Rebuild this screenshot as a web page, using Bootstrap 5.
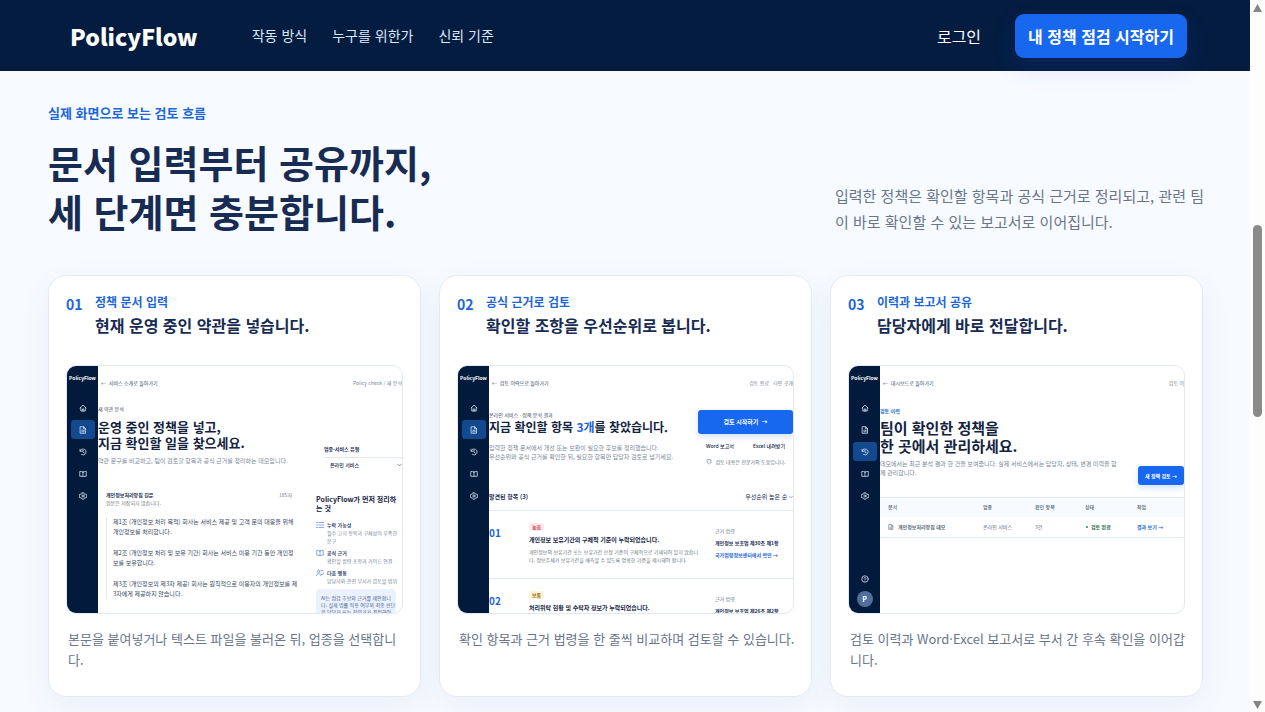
<!DOCTYPE html>
<html lang="ko">
<head>
<meta charset="utf-8">
<meta name="viewport" content="width=device-width, initial-scale=1">
<title>PolicyFlow</title>
<link href="https://cdn.jsdelivr.net/npm/bootstrap@5.3.0/dist/css/bootstrap.min.css" rel="stylesheet">
<style>
:root{--navy:#041c40;--ink:#172b53;--blue:#1868ef;--link:#1c66d8;--mute:#697589;--line:#e3e9f1}
body{font-family:"Noto Sans CJK KR","Noto Sans",sans-serif;background:#f7fbff;color:var(--ink);padding-right:15px;min-height:100vh}
a{text-decoration:none}
/* header */
.site-head{background:var(--navy);height:71px;padding:0 63px 0 70px;position:relative}
.brand-name{font-size:23px;line-height:40px;font-weight:900;color:#fff}
.site-nav{gap:25px;margin-left:54px}
.site-nav a{font-size:14px;color:#dbe6f7}
.login{font-size:16px;color:#fff;margin-right:34px}
.btn-start{background:var(--blue);color:#fff;font-weight:700;font-size:16px;line-height:24px;padding:10px 13px;border:0;border-radius:9px;box-shadow:0 10px 24px rgba(37,84,235,.15)}
.btn-start:hover{background:#0f58d6;color:#fff}
/* section */
.flow{padding:32px 47px 14px 48px}
.eyebrow{font-size:13px;line-height:20px;font-weight:700;color:var(--link);margin-bottom:14px}
.flow h2{font-size:38px;line-height:49px;font-weight:700;margin:0}
.lead-in{width:368px;font-size:15px;line-height:26px;color:var(--mute);margin:0;white-space:nowrap}
.steps{display:grid;grid-template-columns:repeat(3,minmax(0,1fr));gap:18px;margin-top:40px}
.step{background:#fff;border:1px solid #e3ebf5;border-radius:18px;padding:17px 17px 26px;box-shadow:0 10px 30px rgba(40,90,190,.07)}
.step-head{display:grid;grid-template-columns:29px 1fr;margin-bottom:26px}
.step-no{font-size:14px;line-height:22px;font-weight:700;color:var(--link)}
.step-label{font-size:12px;line-height:18px;font-weight:700;color:var(--link);margin:0}
.step h3{font-size:16px;line-height:28px;font-weight:700;margin:0}
.step-text{font-size:13px;line-height:21px;color:var(--mute);margin:14px 0 0 2px;white-space:nowrap}
/* product previews */
.shot{aspect-ratio:336/248;margin:0;border:1px solid var(--line);border-radius:10px;overflow:hidden;display:flex;white-space:nowrap;font-size:5px;line-height:8px;background:#fff}
.shot-side{flex:0 0 31px;background:#021a3b;color:#d5e2f5;display:flex;flex-direction:column;align-items:center;padding:8px 0 6px}
.shot-side b{color:#fff;margin-bottom:16px}
.shot-side i{display:flex;width:24px;height:19px;margin-bottom:3px;border-radius:3px;align-items:center;justify-content:center}
.shot-side i.on{background:#12498f}
.shot-side svg{width:8px;height:8px}
.ico{fill:none;stroke:currentColor;stroke-width:1.6;stroke-linecap:round;stroke-linejoin:round;flex:none}
.avatar{width:16px;height:16px;border-radius:50%;background:#506f9d;color:#fff;font-size:7px;line-height:16px;font-weight:700;text-align:center}
.shot-main{flex:1;min-width:0;overflow:hidden}
.shot-top{display:flex;justify-content:space-between;height:34px;align-items:center;padding-left:3px;color:#7a8596}
.shot-top a{color:#35486a}
.shot-title{font-weight:700;font-size:13px;line-height:16px;color:#14233f}
.title-sm{font-size:12px}
.title-lg{font-size:15px;line-height:18px}
.hero-input{padding:5px 0 7px}
.hero-input .shot-title{margin:6px 0 5px}
.hero-result{padding-top:11px}
.hero-log{padding:7px 0 8px}
.side-actions{padding-top:10px;width:95px}
.shot-kick{color:#34435d}
.shot-par{font-size:6px;line-height:9px;color:#7a8596}
.shot select{appearance:none;border:0;border-top:1px solid var(--line);background:transparent;font-size:5px;line-height:8px;font-weight:500;color:#14233f;width:78px;padding:3px 6px;display:block}
.shot button{border:0;background:none;padding:0;font-weight:500;color:#14233f;font-size:5px;line-height:8px}
.shot button.go{background:var(--blue);color:#fff;font-weight:700;border-radius:3px;box-shadow:0 3px 6px rgba(24,104,239,.2)}
.shot button.go-lg{width:100%;height:24px;font-size:6px}
.shot button.go-sm{width:46px;height:19px;margin:0 0 8px -30px;flex:none}
.editor{margin-top:19px}
.doc{padding:0 0 0 6px;border-left:1px solid var(--line);margin-top:10px;font-size:6px;line-height:10px;color:#34435d}
.doc p{margin:0 0 11px}
.tips{flex:0 0 86px}
.tips strong{font-size:7px;line-height:9px;display:block;color:#14233f}
.tip{display:grid;grid-template-columns:11px 1fr;color:#7a8596}
.tip svg{width:8px;height:8px;color:#6a95df}
.tip b{color:#35486a;display:block}
.note{background:#eaf1ff;color:#50658c;border-radius:4px;padding:5px;width:80px;line-height:7px;margin-top:4px}
.found{margin:27px 0 9px;font-size:6px}
.find{display:grid;grid-template-columns:40px 186px 1fr;border-top:1px solid var(--line);height:68px;padding-top:12px}
.find-no{font-size:10px;line-height:20px;font-weight:700;color:var(--link)}
.find-tag{display:inline-block;padding:0 3px;border-radius:2px;background:#ffe9ec;color:#d04458;font-weight:700}
.find-tag.mid{background:#fff3d6;color:#a07418}
.find h4{font-size:6px;line-height:10px;font-weight:700;margin:4px 0 3px;color:#14233f}
.blue-text{color:var(--link)}
.log{width:304px;border-collapse:collapse;margin:12px 0 0;color:#5b687d}
.log th{background:#f7fbff;border-top:1px solid var(--line);height:19px;font-weight:500;padding:0}
.log td{height:21px;padding:0;border-bottom:1px solid var(--line)}
.log .first{padding-left:8px}
.log .done{color:#2c6b50}
.dot{display:inline-block;width:2px;height:2px;border-radius:50%;background:#2c8b60;vertical-align:middle;margin:0 3px 0 1px}
/* scroll rail */
.rail{position:fixed;inset:0 0 0 auto;width:15px;background:#fdfdfd;display:flex;flex-direction:column;align-items:center;justify-content:space-between;padding:4px 0 3px}
.rail svg{width:9px;height:8px;fill:#858585}
.rail-thumb{position:absolute;top:31.6%;height:27%;width:9px;border-radius:5px;background:#8a8a8a}
</style>
</head>
<body>
<svg class="d-none" xmlns="http://www.w3.org/2000/svg">
<symbol id="home" viewBox="0 0 16 16"><path d="M2 8 8 2l6 6M3.500 7v7h9V7M6.500 14v-4h3v4"/></symbol>
<symbol id="file" viewBox="0 0 16 16"><path d="M3 1.500h6.500L13 5v9.500H3zM9 1.500V5.500h4M5.500 8.500h5M5.500 11.500h5"/></symbol>
<symbol id="hist" viewBox="0 0 16 16"><path d="M2 2.500v4h4M2.500 6A6 6 0 1 1 5 13M8 5v3.500l2.500 1.500"/></symbol>
<symbol id="book" viewBox="0 0 16 16"><path d="M8 4v9M8 4C6 3 4 3 1.500 3v9.500H6.500L8 13.500l1.500-1H14.500V3C12 3 10 3 8 4z"/></symbol>
<symbol id="gear" viewBox="0 0 16 16"><circle cx="8" cy="8" r="2.200"/><path d="m6.500 1.500h3l.6 2 2 1.100 2-.5 1.400 2.500L14 8l1.500 1.500-1.400 2.500-2-.5-2 1.100-.6 2h-3l-.6-2-2-1.100-2 .5L.5 9.500 2 8 .5 6.500 1.900 4l2 .5 2-1.100z"/></symbol>
<symbol id="help" viewBox="0 0 16 16"><circle cx="8" cy="8" r="6.500"/><path d="M6 6.500C6 4 10 4 10 6.500 10 8 8 8 8 9.500M8 11.800v.1"/></symbol>
<symbol id="list" viewBox="0 0 16 16"><path d="M1 3h2M6 3h9M1 8h2M6 8h9M1 13h2M6 13h9"/></symbol>
<symbol id="team" viewBox="0 0 16 16"><circle cx="5" cy="5" r="2.500"/><path d="M1 13c0-5 8-5 8 0M10 10l2 2 3.500-5M10 3h4"/></symbol>
<symbol id="shield" viewBox="0 0 16 16"><path d="M13 9V3H3v5c0 4 3 5.500 5 6.500M9 11l2 2 4-4"/></symbol>
</svg>

<header class="site-head d-flex align-items-center">
  <a class="brand-name" href="#">PolicyFlow</a>
  <nav class="site-nav d-flex me-auto"><a href="#how">작동 방식</a><a href="#who">누구를 위한가</a><a href="#trust">신뢰 기준</a></nav>
  <a class="login" href="#login">로그인</a>
  <button type="button" class="btn btn-start">내 정책 점검 시작하기</button>
</header>

<main class="flow" id="how">
  <p class="eyebrow">실제 화면으로 보는 검토 흐름</p>
  <div class="d-flex justify-content-between align-items-end">
    <h2>문서 입력부터 공유까지,<br>세 단계면 충분합니다.</h2>
    <p class="lead-in">입력한 정책은 확인할 항목과 공식 근거로 정리되고, 관련 팀<br>이 바로 확인할 수 있는 보고서로 이어집니다.</p>
  </div>

  <div class="steps">
    <article class="step">
      <div class="step-head"><span class="step-no">01</span><div><p class="step-label">정책 문서 입력</p><h3>현재 운영 중인 약관을 넣습니다.</h3></div></div>
      <figure class="shot">
        <div class="shot-side"><b>PolicyFlow</b><i><svg class="ico"><use href="#home"/></svg></i><i class="on"><svg class="ico"><use href="#file"/></svg></i><i><svg class="ico"><use href="#hist"/></svg></i><i><svg class="ico"><use href="#book"/></svg></i><i><svg class="ico"><use href="#gear"/></svg></i></div>
        <div class="shot-main">
          <div class="shot-top"><a href="#">← &nbsp;서비스 소개로 돌아가기</a><span>Policy check / 새 분석</span></div>
          <div class="d-flex justify-content-between align-items-end">
            <div class="hero-input"><div class="shot-kick">새 약관 분석</div><div class="shot-title">운영 중인 정책을 넣고,<br>지금 확인할 일을 찾으세요.</div><div class="shot-par">약관 문구를 비교하고, 팀이 검토할 항목과 공식 근거를 정리하는 데모입니다.</div></div>
            <div class="position-relative"><label for="kind" class="d-block fw-bold mb-1">업종·서비스 유형</label><select id="kind"><option>온라인 서비스</option></select><svg class="ico position-absolute bottom-0 end-0 mb-1" width="5" height="6" viewBox="0 0 16 16"><path d="m2 5 6 6 6-6"/></svg></div>
          </div>
          <div class="editor d-flex">
            <div class="flex-grow-1 ps-2"><div class="d-flex justify-content-between pe-4"><b>개인정보처리방침 원문</b><span class="text-secondary">185자</span></div><div class="text-secondary">원문은 저장되지 않습니다.</div>
              <div class="doc"><p>제1조 (개인정보 처리 목적) 회사는 서비스 제공 및 고객 문의 대응을 위해<br>개인정보를 처리합니다.</p><p>제2조 (개인정보 처리 및 보유 기간) 회사는 서비스 이용 기간 동안 개인정<br>보를 보유합니다.</p><p>제3조 (개인정보의 제3자 제공) 회사는 원칙적으로 이용자의 개인정보를 제<br>3자에게 제공하지 않습니다.</p></div></div>
            <div class="tips pt-1"><strong>PolicyFlow가 먼저 정리하<br>는 것</strong>
              <div class="tip mt-2"><svg class="ico"><use href="#list"/></svg><div><b>누락 가능성</b>필수 고지 항목과 구체성이 부족한<br>문구</div></div>
              <div class="tip mt-1"><svg class="ico"><use href="#book"/></svg><div><b>공식 근거</b>확인할 법령 조항과 가이드 연결</div></div>
              <div class="tip mt-1"><svg class="ico"><use href="#team"/></svg><div><b>다음 행동</b>담당자와 관련 부서가 검토할 범위</div></div>
              <div class="note">AI는 점검 후보와 근거를 제안합니<br>다. 실제 법률 적용 여부와 최종 판단<br>은 담당자 또는 전문가가 결정해야</div></div>
          </div>
        </div>
      </figure>
      <p class="step-text">본문을 붙여넣거나 텍스트 파일을 불러온 뒤, 업종을 선택합니<br>다.</p>
    </article>

    <article class="step">
      <div class="step-head"><span class="step-no">02</span><div><p class="step-label">공식 근거로 검토</p><h3>확인할 조항을 우선순위로 봅니다.</h3></div></div>
      <figure class="shot">
        <div class="shot-side"><b>PolicyFlow</b><i><svg class="ico"><use href="#home"/></svg></i><i class="on"><svg class="ico"><use href="#file"/></svg></i><i><svg class="ico"><use href="#hist"/></svg></i><i><svg class="ico"><use href="#book"/></svg></i><i><svg class="ico"><use href="#gear"/></svg></i></div>
        <div class="shot-main">
          <div class="shot-top"><a href="#">← &nbsp;검토 이력으로 돌아가기</a><span>검토 완료 &nbsp; 타인 공개</span></div>
          <div class="d-flex justify-content-between">
            <div class="hero-result"><div class="shot-kick">온라인 서비스 · 정책 분석 결과</div><div class="shot-title title-sm">지금 확인할 항목 <span class="blue-text">3개</span>를 찾았습니다.</div><div class="shot-par mt-2">입력한 정책 문서에서 개선 또는 보완이 필요한 후보를 정리했습니다.<br>우선순위와 공식 근거를 확인한 뒤, 필요한 항목만 담당자 검토로 넘기세요.</div></div>
            <div class="side-actions"><button type="button" class="go go-lg">검토 시작하기 &nbsp;→</button><div class="d-flex justify-content-between px-2 mt-2"><button type="button">Word 보고서</button><button type="button">Excel 내려받기</button></div><div class="d-flex justify-content-center mt-2 gap-1 text-secondary"><svg class="ico" width="6" height="7"><use href="#shield"/></svg>검토 내용은 전문가의 도움입니다.</div></div>
          </div>
          <div class="found d-flex justify-content-between"><b>발견된 항목 (3)</b><span>우선순위 높은 순 <svg class="ico" width="4" height="4" viewBox="0 0 16 16"><path d="m2 5 6 6 6-6"/></svg></span></div>
          <div class="find"><span class="find-no">01</span><div><span class="find-tag">높음</span><h4>개인정보 보유기간의 구체적 기준이 누락되었습니다.</h4><div class="text-secondary">개인정보의 보유기간 또는 보유기간 산정 기준이 구체적으로 기재되어 있지 않습니<br>다. 정보주체가 보유기간을 예측할 수 있도록 명확한 기준을 제시해야 합니다.</div></div><div class="pt-1"><div class="text-secondary">근거 법령</div><div class="fw-bold mt-1">개인정보 보호법 제30조 제1항</div><a class="d-block mt-1 fw-bold blue-text" href="#">국가법령정보센터에서 확인 →</a></div></div>
          <div class="find"><span class="find-no">02</span><div><span class="find-tag mid">보통</span><h4>처리위탁 현황 및 수탁자 정보가 누락되었습니다.</h4></div><div class="pt-1"><div class="text-secondary">근거 법령</div><div class="fw-bold mt-1">개인정보 보호법 제26조 제2항</div></div></div>
        </div>
      </figure>
      <p class="step-text">확인 항목과 근거 법령을 한 줄씩 비교하며 검토할 수 있습니다.</p>
    </article>

    <article class="step">
      <div class="step-head"><span class="step-no">03</span><div><p class="step-label">이력과 보고서 공유</p><h3>담당자에게 바로 전달합니다.</h3></div></div>
      <figure class="shot">
        <div class="shot-side"><b>PolicyFlow</b><i><svg class="ico"><use href="#home"/></svg></i><i><svg class="ico"><use href="#file"/></svg></i><i class="on"><svg class="ico"><use href="#hist"/></svg></i><i><svg class="ico"><use href="#book"/></svg></i><i><svg class="ico"><use href="#gear"/></svg></i><svg class="ico mt-auto mb-2"><use href="#help"/></svg><span class="avatar">P</span></div>
        <div class="shot-main">
          <div class="shot-top"><a href="#">← &nbsp;대시보드로 돌아가기</a><span>검토 이</span></div>
          <div class="d-flex justify-content-between align-items-end">
            <div class="hero-log"><div class="fw-bold blue-text">검토 이력</div><div class="shot-title title-lg mt-1">팀이 확인한 정책을<br>한 곳에서 관리하세요.</div><div class="shot-par mt-1">데모에서는 최근 분석 결과 한 건을 보여줍니다. 실제 서비스에서는 담당자, 상태, 변경 이력을 함<br>께 관리합니다.</div></div>
            <button type="button" class="go go-sm mb-0">새 정책 검토 →</button>
          </div>
          <table class="log"><colgroup><col width="103"><col width="52"><col width="50"><col width="52"><col></colgroup><thead><tr><th class="first">문서</th><th>업종</th><th>확인 항목</th><th>상태</th><th>작업</th></tr></thead><tbody><tr><td class="first"><svg class="ico me-1" width="6" height="6"><use href="#file"/></svg><b>개인정보처리방침 데모</b></td><td>온라인 서비스</td><td>3건</td><td class="done"><span class="dot"></span><b>검토 완료</b></td><td><a class="fw-bold blue-text" href="#">결과 보기 →</a></td></tr></tbody></table>
        </div>
      </figure>
      <p class="step-text">검토 이력과 Word·Excel 보고서로 부서 간 후속 확인을 이어갑<br>니다.</p>
    </article>
  </div>
</main>

<div class="rail" aria-hidden="true"><svg viewBox="0 0 9 8"><path d="M4.500 0 9 8H0z"/></svg><span class="rail-thumb"></span><svg viewBox="0 0 9 8"><path d="M4.500 8 9 0H0z"/></svg></div>
<script src="https://cdn.jsdelivr.net/npm/bootstrap@5.3.0/dist/js/bootstrap.bundle.min.js"></script>
</body>
</html>
